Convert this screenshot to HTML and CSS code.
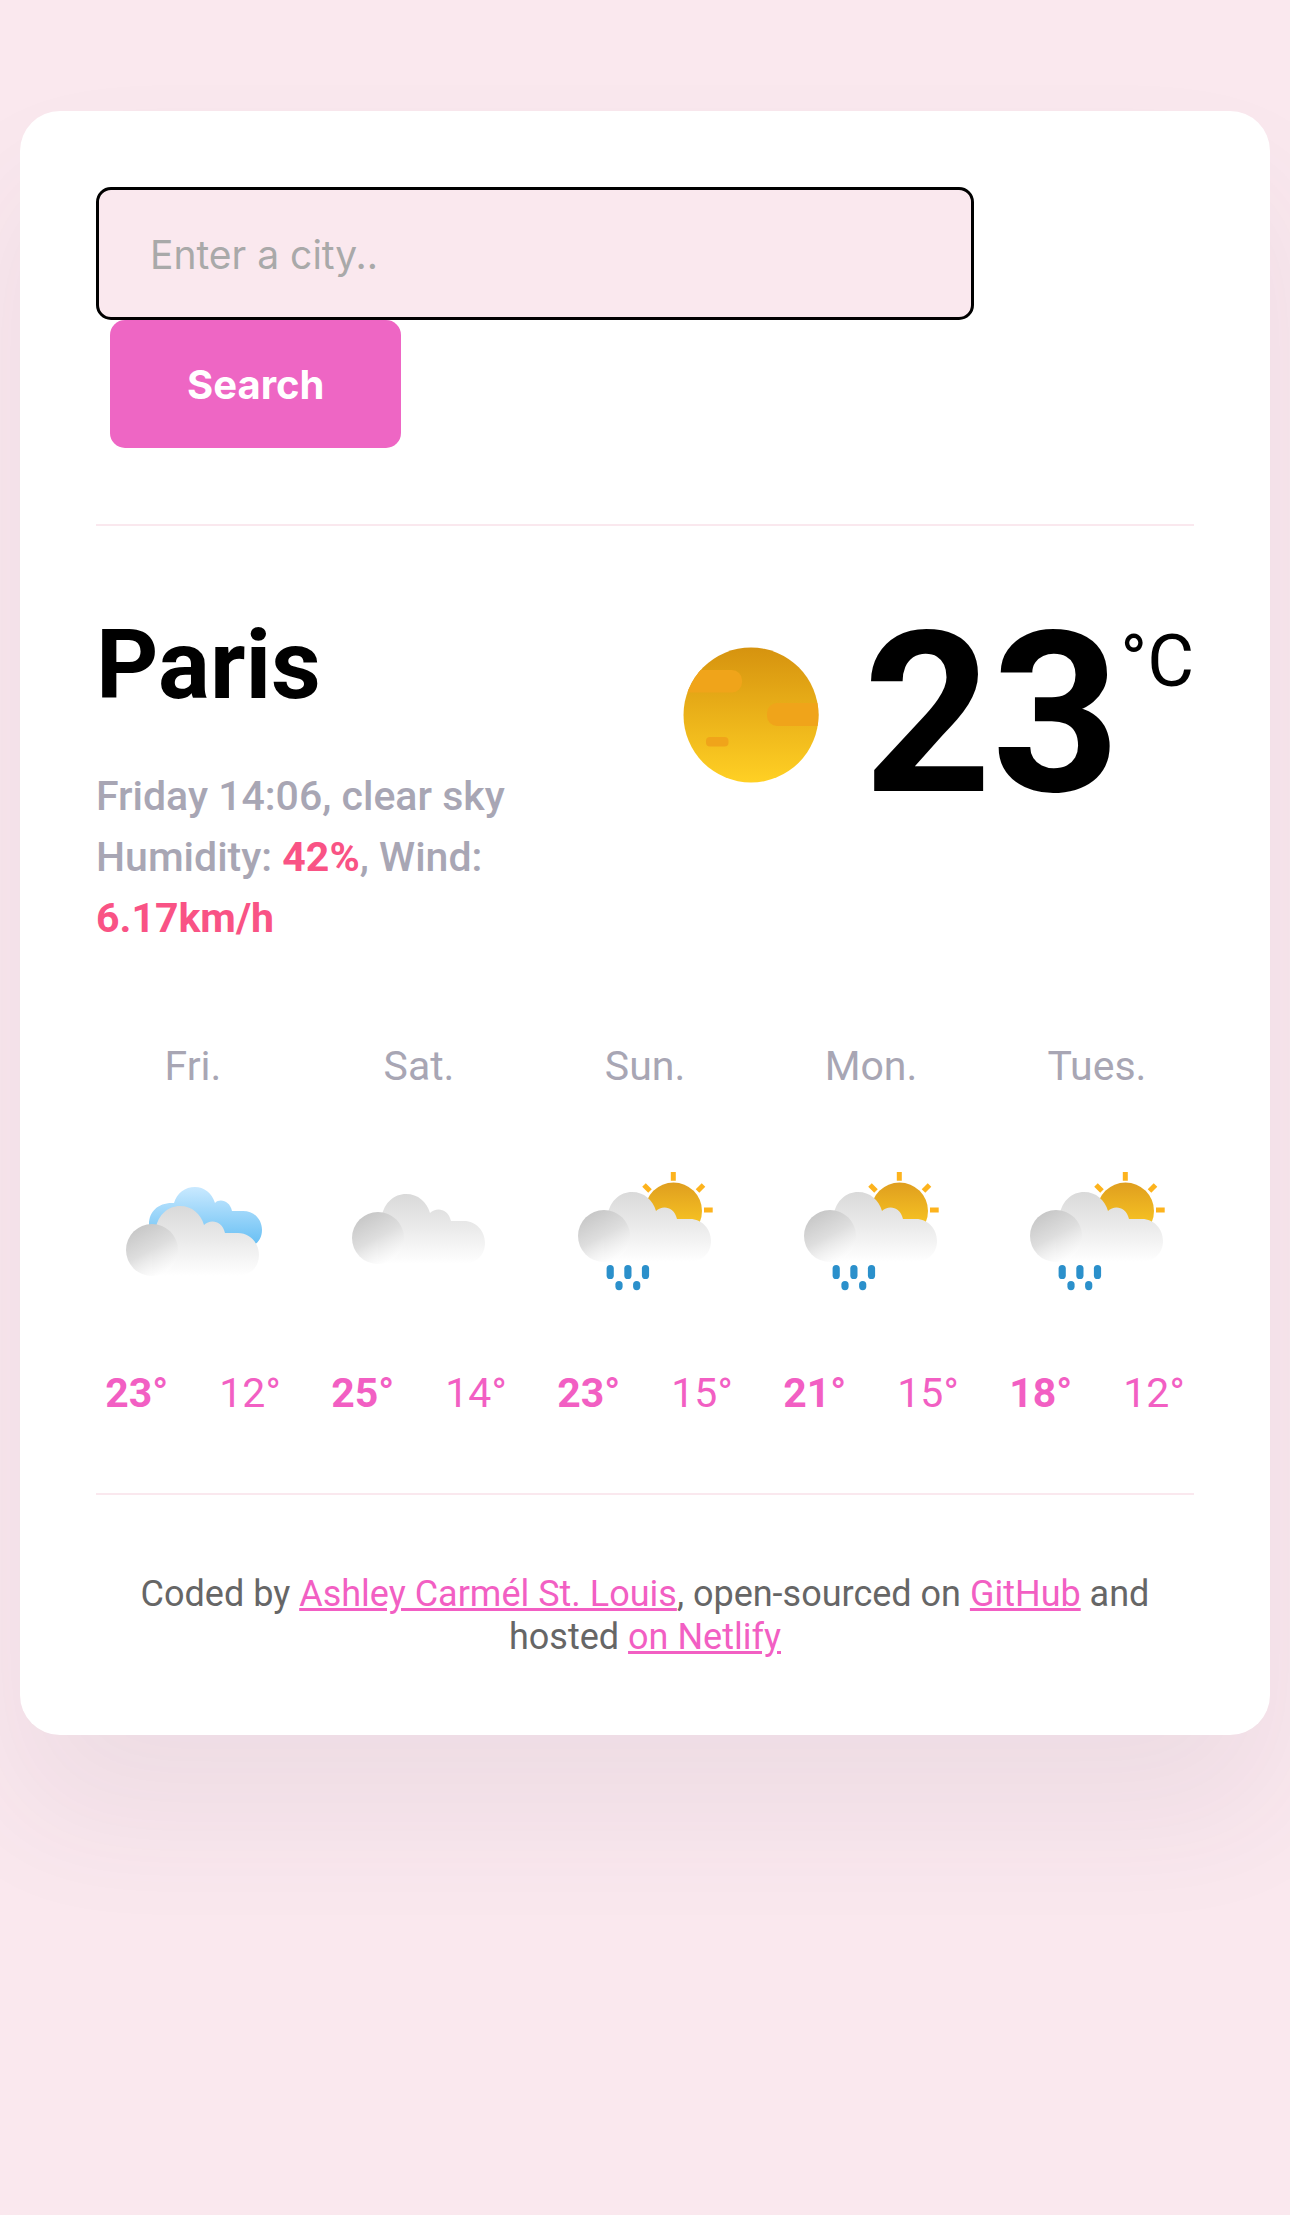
FILE: index.html
```html
<!DOCTYPE html>
<html lang="en">
<head>
  <meta charset="utf-8">
  <meta name="viewport" content="width=device-width, initial-scale=1">
  <title>Weather</title>
  <link rel="stylesheet" href="styles.css">
</head>
<body>
  <svg class="defs" aria-hidden="true">
    <defs>
      <linearGradient id="cloud-body" gradientUnits="userSpaceOnUse" x1="0" y1="40" x2="0" y2="110">
        <stop offset="0" stop-color="#d9d9d9"/>
        <stop offset="0.5" stop-color="#ebebeb"/>
        <stop offset="1" stop-color="#ffffff"/>
      </linearGradient>
      <linearGradient id="cloud-puff" x1="0.2" y1="0.05" x2="0.7" y2="0.98">
        <stop offset="0" stop-color="#c6c6c6"/>
        <stop offset="0.5" stop-color="#dedede"/>
        <stop offset="1" stop-color="#ffffff" stop-opacity="0.6"/>
      </linearGradient>
      <linearGradient id="cloud-blue" gradientUnits="userSpaceOnUse" x1="0" y1="33" x2="0" y2="94">
        <stop offset="0" stop-color="#c9e9ff"/>
        <stop offset="1" stop-color="#62bdf3"/>
      </linearGradient>
      <linearGradient id="sun-fill" x1="0" y1="0" x2="0" y2="1">
        <stop offset="0" stop-color="#d6930f"/>
        <stop offset="1" stop-color="#ffd024"/>
      </linearGradient>
      <linearGradient id="sun-small" x1="0" y1="0" x2="0" y2="1">
        <stop offset="0" stop-color="#df9e1f"/>
        <stop offset="1" stop-color="#ffd024"/>
      </linearGradient>
      <clipPath id="sun-clip"><circle cx="68" cy="68" r="67.5"/></clipPath>
      <g id="cloud">
        <path fill="url(#cloud-body)" d="M36 110V62H40C42 49 52 40 64 40C76 40 85 48 88 59C94 53 106 54 109 67H122C134 67 143 77 143 89C143 101 134 110 122 110Z"/>
        <circle cx="36" cy="84" r="26" fill="url(#cloud-puff)"/>
      </g>
      <g id="sun-rain">
        <circle cx="105.500" cy="57" r="28.500" fill="url(#sun-small)"/>
        <path stroke="#fdb31d" stroke-width="5" stroke-linecap="butt" fill="none" d="M105.300 18V26.700M136 56H144.700M129.500 37L135.500 31M82 37L76 31"/>
        <use href="#cloud" y="-2"/>
        <g fill="#2b90cb">
          <rect x="38.600" y="111" width="7.200" height="14" rx="3.600"/>
          <rect x="56.300" y="111" width="7.200" height="14" rx="3.600"/>
          <rect x="73.900" y="111" width="7.200" height="14" rx="3.600"/>
          <rect x="47.400" y="127" width="7.200" height="9.200" rx="3.600"/>
          <rect x="65.100" y="127" width="7.200" height="9.200" rx="3.600"/>
        </g>
      </g>
    </defs>
  </svg>

  <main class="card">
    <form class="search">
      <input class="search-input" type="search" placeholder="Enter a city.." aria-label="City">
      <button class="search-button" type="button">Search</button>
    </form>

    <section class="current">
      <div>
        <h1 class="city">Paris</h1>
        <p class="details">Friday 14:06, clear sky<br>Humidity: <strong>42%</strong>, Wind: <strong>6.17km/h</strong></p>
      </div>
      <div class="temperature">
        <svg class="temperature-icon" viewBox="0 0 136 136" role="img" aria-label="Clear sky">
          <circle cx="68" cy="68" r="67.500" fill="url(#sun-fill)"/>
          <g clip-path="url(#sun-clip)" fill="#f0a41a">
            <rect x="-20" y="23" width="79" height="22.500" rx="10"/>
            <rect x="84" y="56" width="80" height="23" rx="10"/>
            <rect x="23" y="90" width="22.500" height="9.500" rx="4"/>
          </g>
        </svg>
        <span class="temperature-value">23</span>
        <span class="temperature-unit">°C</span>
      </div>
    </section>

    <section class="forecast">
      <div class="day">
        <div class="day-name">Fri.</div>
        <svg class="day-icon" viewBox="0 0 154 154" role="img" aria-label="Broken clouds">
          <path fill="url(#cloud-blue)" d="M54 94C41 94 33 82 33 70C33 57 43 48 58 49C61 39 69 33 79 33C88 33 96 39 99 49C104 44 114 47 116 57H127C138 57 146 65 146 76C146 87 138 94 127 94Z"/>
          <use href="#cloud" y="12"/>
        </svg>
        <div class="day-temps"><strong>23°</strong><span>12°</span></div>
      </div>
      <div class="day">
        <div class="day-name">Sat.</div>
        <svg class="day-icon" viewBox="0 0 154 154" role="img" aria-label="Cloudy"><use href="#cloud"/></svg>
        <div class="day-temps"><strong>25°</strong><span>14°</span></div>
      </div>
      <div class="day">
        <div class="day-name">Sun.</div>
        <svg class="day-icon" viewBox="0 0 154 154" role="img" aria-label="Rain"><use href="#sun-rain"/></svg>
        <div class="day-temps"><strong>23°</strong><span>15°</span></div>
      </div>
      <div class="day">
        <div class="day-name">Mon.</div>
        <svg class="day-icon" viewBox="0 0 154 154" role="img" aria-label="Rain"><use href="#sun-rain"/></svg>
        <div class="day-temps"><strong>21°</strong><span>15°</span></div>
      </div>
      <div class="day">
        <div class="day-name">Tues.</div>
        <svg class="day-icon" viewBox="0 0 154 154" role="img" aria-label="Rain"><use href="#sun-rain"/></svg>
        <div class="day-temps"><strong>18°</strong><span>12°</span></div>
      </div>
    </section>

    <footer class="footer">
      Coded by <a href="#author">Ashley Carmél St. Louis</a>, open-sourced on <a href="#github">GitHub</a> and hosted <a href="#netlify">on Netlify</a>
    </footer>
  </main>
</body>
</html>
```

FILE: styles.css
```css
* {
  box-sizing: border-box;
}

body {
  min-height: 100vh;
  margin: 0;
  padding: 111px 20px;
  background: #fae8ee;
  color: #000;
  font-family: Roboto, "Liberation Sans", sans-serif;
  font-size: 41px;
}

.defs {
  position: absolute;
  width: 0;
  height: 0;
}

.card {
  padding: 76px;
  border-radius: 40px;
  background: #fff;
  box-shadow: 0 77px 134px rgba(65, 50, 100, 0.07);
}

.search {
  display: flex;
  flex-direction: column;
  align-items: flex-start;
  padding-bottom: 76px;
  border-bottom: 2px solid #fae8ee;
}

.search-input {
  width: 80%;
  height: 133px;
  padding: 2px 51px 0;
  border: 3px solid #000;
  border-radius: 15px;
  background: #fae8ee;
  font-family: Inter, sans-serif;
  font-size: 39px;
  appearance: none;
}

.search-input::placeholder {
  color: #a9a9a9;
  opacity: 1;
}

.search-button {
  height: 128px;
  margin-left: 14px;
  padding: 0 77px;
  border: 0;
  border-radius: 15px;
  background: #ee66c4;
  color: #fff;
  font-family: Inter, sans-serif;
  font-size: 40px;
  font-weight: 700;
}

.current {
  display: grid;
  grid-template-columns: 1fr 1fr;
  padding-top: 83px;
}

.city {
  margin: 0 0 45px;
  font-size: 97px;
  line-height: 112px;
}

.details {
  margin: 0;
  color: #a8a6b4;
  font-weight: 500;
  line-height: 61px;
}

.details strong {
  color: #f95385;
  font-weight: 700;
}

.temperature {
  display: flex;
  justify-content: flex-end;
  align-items: flex-start;
}

.temperature-icon {
  width: 136px;
  height: 136px;
  margin: 38px 44px 0 0;
}

.temperature-value {
  font-size: 224px;
  font-weight: 700;
  line-height: 212px;
}

.temperature-unit {
  font-size: 72px;
  line-height: 106px;
}

.forecast {
  display: grid;
  grid-template-columns: repeat(5, 1fr);
  gap: 32px;
  padding: 87px 0 69px;
  border-bottom: 2px solid #fae8ee;
}

.day {
  display: flex;
  flex-direction: column;
  align-items: center;
  color: #f25fc3;
}

.day-name {
  color: #a8a6b4;
  line-height: 61px;
}

.day-icon {
  width: 154px;
  height: 154px;
  margin: 57px 0 55px;
}

.day-temps {
  display: flex;
  gap: 51px;
  line-height: 61px;
}

.footer {
  padding-top: 78px;
  color: #666;
  font-size: 36px;
  line-height: 43px;
  text-align: center;
}

.footer a {
  color: #f25fc3;
}
```
